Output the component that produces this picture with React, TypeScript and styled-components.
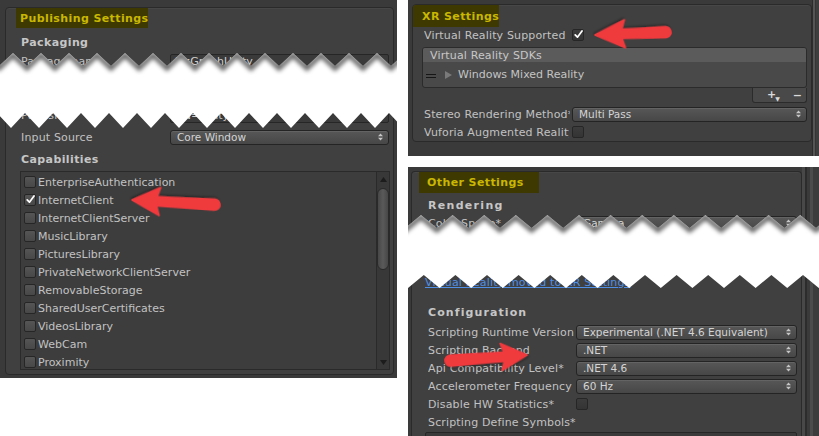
import React from "react";
import styled, { createGlobalStyle } from "styled-components";

const GlobalStyle = createGlobalStyle`
  html, body { margin: 0; padding: 0; background: #ffffff; overflow: hidden; }
  body {
    font-family: "DejaVu Sans", "Liberation Sans", sans-serif;
    font-size: 11px;
    color: #c2c2c2;
  }
  #root { width: 819px; height: 436px; }
`;

const Page = styled.main`
  position: relative;
  width: 819px;
  height: 436px;
  display: flex;
  gap: 11px;
  align-items: flex-start;
`;

const Column = styled.div`
  display: flex;
  flex-direction: column;
  gap: 11px;
  width: 411px;
  flex: none;
`;

const Panel = styled.section<{ $w: number; $h: number }>`
  position: relative;
  width: ${(p) => p.$w}px;
  height: ${(p) => p.$h}px;
  flex: none;
  display: flex;
  background: #3a3a3a;
  overflow: hidden;
`;

const Box = styled.div<{ $m: string; $open?: boolean }>`
  flex: 1;
  min-width: 0;
  margin: ${(p) => p.$m};
  border: 1px solid #2a2a2a;
  border-bottom: ${(p) => (p.$open ? "none" : "1px solid #2a2a2a")};
  border-radius: ${(p) => (p.$open ? "4px 4px 0 0" : "4px")};
  background: #404040;
  box-shadow: inset 0 1px 0 rgba(255, 255, 255, 0.04);
  display: flex;
  flex-direction: column;
  overflow: hidden;
`;

const Rail = styled.div<{ $w: number; $bg: string }>`
  width: ${(p) => p.$w}px;
  flex: none;
  background: ${(p) => p.$bg};
`;

const Title = styled.div<{ $ml: number; $w: number; $h: number; $pl: number }>`
  flex: none;
  margin-left: ${(p) => p.$ml}px;
  width: ${(p) => p.$w}px;
  height: ${(p) => p.$h}px;
  box-sizing: border-box;
  padding-left: ${(p) => p.$pl}px;
  display: flex;
  align-items: center;
  background: #3e3900;
  color: #c9b700;
  font-weight: bold;
  font-size: 11px;
  letter-spacing: 0.4px;
  white-space: nowrap;
`;

const Body = styled.div<{ $pl: number; $pr: number }>`
  display: flex;
  flex-direction: column;
  padding: 0 ${(p) => p.$pr}px 0 ${(p) => p.$pl}px;
`;

const Heading = styled.div<{ $mt: number; $ls?: number }>`
  height: 18px;
  margin-top: ${(p) => p.$mt}px;
  display: flex;
  align-items: center;
  font-weight: bold;
  color: #c6c6c6;
  letter-spacing: ${(p) => p.$ls ?? 0.4}px;
  white-space: nowrap;
`;

const Row = styled.div<{ $mt?: number; $h?: number }>`
  height: ${(p) => p.$h ?? 18}px;
  margin-top: ${(p) => p.$mt ?? 0}px;
  display: flex;
  align-items: center;
  flex: none;
`;

const Label = styled.span<{ $w: number; $gap?: number }>`
  width: ${(p) => p.$w}px;
  margin-right: ${(p) => p.$gap ?? 0}px;
  flex: none;
  white-space: nowrap;
  overflow: hidden;
  color: #c2c2c2;
  letter-spacing: 0.15px;
`;

const Popup = styled.div`
  flex: 1;
  min-width: 0;
  height: 15px;
  box-sizing: border-box;
  border: 1px solid #242424;
  border-radius: 3px;
  background: linear-gradient(#575757, #474747);
  box-shadow: inset 0 1px 0 rgba(255, 255, 255, 0.08);
  padding: 0 5px 0 6px;
  display: flex;
  align-items: center;
  justify-content: space-between;
  color: #d4d4d4;
  font-size: 10.5px;
  white-space: nowrap;
`;

const Field = styled.div<{ $h?: number; $ml?: number }>`
  flex: 1;
  min-width: 0;
  height: ${(p) => p.$h ?? 15}px;
  margin-left: ${(p) => p.$ml ?? 0}px;
  box-sizing: border-box;
  border: 1px solid #262626;
  border-radius: 2px;
  background: #3a3a3a;
  padding-left: 4px;
  display: flex;
  align-items: center;
  color: #cfcfcf;
  white-space: nowrap;
`;

const Check = styled.span<{ $dark?: boolean }>`
  width: 12px;
  height: 12px;
  box-sizing: border-box;
  flex: none;
  border: 1px solid #262626;
  border-radius: 2px;
  background: ${(p) =>
    p.$dark ? "linear-gradient(#3c3c3c, #343434)" : "linear-gradient(#555555, #484848)"};
  display: inline-flex;
  align-items: center;
  justify-content: center;
`;

const Link = styled.span`
  margin-left: -3px;
  color: #4f8fe6;
  text-decoration: underline;
  white-space: nowrap;
  letter-spacing: 0.15px;
`;

/* capabilities list */
const CapFrame = styled.div`
  display: flex;
  height: 199px;
  margin: 3px -1px 0 -1px;
  flex: none;
`;

const CapList = styled.div`
  flex: 1;
  border: 1px solid #2a2a2a;
  background: #3d3d3d;
  padding-top: 1px;
  overflow: hidden;
`;

const CapItem = styled.div`
  height: 18px;
  padding-left: 3px;
  display: flex;
  align-items: center;
  gap: 2px;
  color: #c2c2c2;
  white-space: nowrap;
`;

const ScrollTrack = styled.div`
  width: 13px;
  flex: none;
  box-sizing: border-box;
  border: 1px solid #2a2a2a;
  border-left: none;
  background: #383838;
  display: flex;
  flex-direction: column;
`;

const ScrollArrow = styled.div`
  height: 14px;
  flex: none;
  display: flex;
  align-items: center;
  justify-content: center;
`;

const ScrollThumb = styled.div`
  height: 82px;
  margin-top: 2px;
  flex: none;
  box-sizing: border-box;
  border: 1px solid #2a2a2a;
  border-radius: 6px;
  background: linear-gradient(to right, #474747, #5a5a5a 50%, #474747);
`;

const ScrollSpace = styled.div`
  flex: 1;
`;

/* XR reorderable list */
const SdkList = styled.div`
  margin: 4px 0 0 -2px;
  border: 1px solid #2b2b2b;
  border-radius: 3px;
  overflow: hidden;
  background: #494949;
  flex: none;
`;

const SdkHeader = styled.div`
  height: 14px;
  padding-left: 7px;
  display: flex;
  align-items: center;
  background: #5b5b5b;
  color: #c8c8c8;
  letter-spacing: 0.15px;
`;

const SdkRow = styled.div`
  height: 25px;
  padding-left: 3px;
  display: flex;
  align-items: center;
  color: #c4c4c4;
`;

const Handle = styled.span`
  width: 10px;
  height: 4px;
  border-top: 1px solid #161616;
  border-bottom: 1px solid #161616;
  box-sizing: border-box;
  margin-top: 3px;
  margin-right: 9px;
`;

const Disclosure = styled.span`
  width: 0;
  height: 0;
  border-top: 4px solid transparent;
  border-bottom: 4px solid transparent;
  border-left: 7px solid #7a7a7a;
  margin-right: 6px;
`;

const SdkFooter = styled.div`
  align-self: flex-end;
  width: 55px;
  height: 15px;
  box-sizing: border-box;
  border: 1px solid #2b2b2b;
  border-top: none;
  border-radius: 0 0 3px 3px;
  background: #494949;
  display: flex;
  align-items: center;
  padding-left: 14px;
  gap: 13px;
  color: #dadada;
  font-weight: bold;
  flex: none;
`;

const Tiny = styled.span`
  font-size: 6px;
  margin-left: -1px;
  vertical-align: -3px;
`;

/* overlays */
const TearLayer = styled.svg<{ $top: number }>`
  position: absolute;
  left: 0;
  top: ${(p) => p.$top}px;
  pointer-events: none;
`;

const ArrowLayer = styled.svg`
  position: absolute;
  left: 0;
  top: 0;
  pointer-events: none;
`;

const Spinner = () => (
  <svg width="5" height="8" viewBox="0 0 5 8">
    <path d="M0 3.2 L2.5 0.5 L5 3.2 Z M0 4.8 L2.5 7.5 L5 4.8 Z" fill="#c6c6c6" />
  </svg>
);

const Tick = () => (
  <svg width="11" height="11" viewBox="0 0 11 11" style={{ marginTop: -2, marginLeft: 1 }}>
    <path d="M1.5 6 L4.2 8.8 L9.8 1.2" stroke="#ffffff" strokeWidth="2.1" fill="none" strokeLinecap="round" strokeLinejoin="round" />
  </svg>
);

const Tri = ({ up }: { up: boolean }) => (
  <svg width="7" height="5" viewBox="0 0 7 5">
    <path d={up ? "M0 5 L3.5 0 L7 5 Z" : "M0 0 L3.5 5 L7 0 Z"} fill="#1c1c1c" />
  </svg>
);

function tearPaths(
  width: number,
  height: number,
  period: number,
  ampTop: number,
  ampBot: number,
  phaseTop: number,
  phaseBot: number
) {
  const top: string[] = [];
  let x = phaseTop - period;
  top.push(`M${x} 0`);
  while (x < width + period) {
    top.push(`L${(x + period / 2).toFixed(1)} ${ampTop}`);
    x += period;
    top.push(`L${x.toFixed(1)} 0`);
  }
  const endX = x;
  const bot: string[] = [];
  let bx = phaseBot;
  while (bx < endX + period) bx += period;
  bot.push(`L${endX.toFixed(1)} ${height}`);
  bot.push(`L${bx.toFixed(1)} ${height}`);
  while (bx > phaseTop - period * 2) {
    bot.push(`L${(bx - period / 2).toFixed(1)} ${height - ampBot}`);
    bx -= period;
    bot.push(`L${bx.toFixed(1)} ${height}`);
  }
  bot.push(`L${phaseTop - period} ${height}`);
  const fill = top.join(" ") + " " + bot.join(" ") + " Z";
  return { fill, line: top.join(" ") };
}

const Tear = ({
  id,
  top,
  width,
  height,
  period,
  ampTop,
  ampBot,
  phaseTop,
  phaseBot,
}: {
  id: string;
  top: number;
  width: number;
  height: number;
  period: number;
  ampTop: number;
  ampBot: number;
  phaseTop: number;
  phaseBot: number;
}) => {
  const { fill, line } = tearPaths(width, height, period, ampTop, ampBot, phaseTop, phaseBot);
  return (
    <TearLayer $top={top} width={width} height={height} viewBox={`0 0 ${width} ${height}`}>
      <defs>
        <clipPath id={`${id}-clip`}>
          <path d={fill} />
        </clipPath>
        <filter id={`${id}-blur`} x="-10%" y="-50%" width="120%" height="200%">
          <feGaussianBlur stdDeviation="2" />
        </filter>
      </defs>
      <path d={fill} fill="#ffffff" />
      <g clipPath={`url(#${id}-clip)`}>
        <path
          d={line}
          transform="translate(0 2)"
          stroke="#000"
          strokeOpacity="0.6"
          strokeWidth="5"
          fill="none"
          filter={`url(#${id}-blur)`}
        />
      </g>
    </TearLayer>
  );
};

function arrowPath(L: number, hl: number, hw: number, s1: number, s2: number) {
  const bx = -hl;
  return `M0 0 L${bx} ${-hw} L${bx + 3} ${-s1} L${-L + s2} ${-s2} A${s2} ${s2} 0 0 0 ${-L + s2} ${s2} L${bx + 3} ${s1} L${bx} ${hw} Z`;
}

type ArrowSpec = { tip: [number, number]; tail: [number, number]; hl: number; hw: number; s1: number; s2: number };

const arrows: ArrowSpec[] = [
  { tip: [132, 200], tail: [220, 205], hl: 28, hw: 14, s1: 4.5, s2: 5.5 },
  { tip: [595, 35], tail: [671, 32], hl: 30, hw: 14, s1: 4.5, s2: 5.5 },
  { tip: [527, 355], tail: [445, 361], hl: 26, hw: 13.5, s1: 4.5, s2: 5.5 },
];

const Arrows = () => (
  <ArrowLayer width={819} height={436} viewBox="0 0 819 436">
    <defs>
      <filter id="arrow-shadow" x="-20%" y="-50%" width="140%" height="200%">
        <feDropShadow dx="1" dy="1.5" stdDeviation="1.2" floodColor="#000" floodOpacity="0.35" />
      </filter>
    </defs>
    {arrows.map((a, i) => {
      const dx = a.tip[0] - a.tail[0];
      const dy = a.tip[1] - a.tail[1];
      const L = Math.hypot(dx, dy);
      const ang = (Math.atan2(dy, dx) * 180) / Math.PI;
      return (
        <g key={i} transform={`translate(${a.tip[0]} ${a.tip[1]}) rotate(${ang.toFixed(2)})`} filter="url(#arrow-shadow)">
          <path
            d={arrowPath(L, a.hl, a.hw, a.s1, a.s2)}
            fill="#f03a3d"
            stroke="#f03a3d"
            strokeWidth="1.5"
            strokeLinejoin="round"
          />
        </g>
      );
    })}
  </ArrowLayer>
);

const capabilities: { name: string; on?: boolean }[] = [
  { name: "EnterpriseAuthentication" },
  { name: "InternetClient", on: true },
  { name: "InternetClientServer" },
  { name: "MusicLibrary" },
  { name: "PicturesLibrary" },
  { name: "PrivateNetworkClientServer" },
  { name: "RemovableStorage" },
  { name: "SharedUserCertificates" },
  { name: "VideosLibrary" },
  { name: "WebCam" },
  { name: "Proximity" },
];

const configRows: { label: string; value?: string; check?: boolean }[] = [
  { label: "Scripting Runtime Version", value: "Experimental (.NET 4.6 Equivalent)" },
  { label: "Scripting Backend", value: ".NET" },
  { label: "Api Compatibility Level*", value: ".NET 4.6" },
  { label: "Accelerometer Frequency", value: "60 Hz" },
  { label: "Disable HW Statistics*", check: true },
];

export default function App() {
  return (
    <>
      <GlobalStyle />
      <Page>
        {/* Publishing Settings */}
        <Panel $w={397} $h={378}>
          <Box $m="7px 3px 3px 5px">
            <Title $ml={10} $w={132} $h={20} $pl={4}>
              Publishing Settings
            </Title>
            <Body $pl={15} $pr={4}>
              <Heading $mt={5}>Packaging</Heading>
              <Row $mt={1}>
                <Label $w={149}>Package name</Label>
                <Field>MsGraphUnity</Field>
              </Row>
              <Row>
                <Label $w={149}>Package display name</Label>
                <Field>MsGraphUnity</Field>
              </Row>
              <Row>
                <Label $w={149}>Version</Label>
                <Field>1.0.0.0</Field>
              </Row>
              <Row>
                <Label $w={149}>Publisher</Label>
                <Field>CN=Unity</Field>
              </Row>
              <Row $mt={4}>
                <Label $w={149}>Input Source</Label>
                <Popup>
                  Core Window
                  <Spinner />
                </Popup>
              </Row>
              <Heading $mt={4}>Capabilities</Heading>
              <CapFrame>
                <CapList>
                  {capabilities.map((c) => (
                    <CapItem key={c.name}>
                      <Check>{c.on && <Tick />}</Check>
                      {c.name}
                    </CapItem>
                  ))}
                </CapList>
                <ScrollTrack>
                  <ScrollArrow>
                    <Tri up />
                  </ScrollArrow>
                  <ScrollThumb />
                  <ScrollSpace />
                  <ScrollArrow>
                    <Tri up={false} />
                  </ScrollArrow>
                </ScrollTrack>
              </CapFrame>
            </Body>
          </Box>
          <Tear id="tl" top={53} width={397} height={75} period={28} ampTop={13} ampBot={15} phaseTop={13} phaseBot={11} />
        </Panel>

        <Column>
          {/* XR Settings */}
          <Panel $w={411} $h={156}>
            <Box $m="4px 0 14px 4px">
              <Title $ml={0} $w={86} $h={22} $pl={9}>
                XR Settings
              </Title>
              <Body $pl={11} $pr={4}>
                <Row $h={16}>
                  <Label $w={145} $gap={3}>Virtual Reality Supported</Label>
                  <Check $dark>
                    <Tick />
                  </Check>
                </Row>
                <SdkList>
                  <SdkHeader>Virtual Reality SDKs</SdkHeader>
                  <SdkRow>
                    <Handle />
                    <Disclosure />
                    Windows Mixed Reality
                  </SdkRow>
                </SdkList>
                <SdkFooter>
                  <span>
                    +<Tiny>▼</Tiny>
                  </span>
                  <span>−</span>
                </SdkFooter>
                <Row $mt={2}>
                  <Label $w={146} $gap={2}>Stereo Rendering Method*</Label>
                  <Popup>
                    Multi Pass
                    <Spinner />
                  </Popup>
                </Row>
                <Row>
                  <Label $w={145} $gap={3}>Vuforia Augmented Reality</Label>
                  <Check $dark />
                </Row>
              </Body>
            </Box>
            <Rail
              $w={7}
              $bg="linear-gradient(to right, #2c2c2c 0 1px, #555555 1px 3px, #353535 3px 4px, #3e3e3e 4px)"
            />
          </Panel>

          {/* Other Settings */}
          <Panel $w={411} $h={269}>
            <Box $m="4px 0 0 3px" $open>
              <Title $ml={7} $w={120} $h={21} $pl={8}>
                Other Settings
              </Title>
              <Body $pl={16} $pr={4}>
                <Heading $mt={3} $ls={1.3}>Rendering</Heading>
                <Row>
                  <Label $w={148}>Color Space*</Label>
                  <Popup>
                    Gamma
                    <Spinner />
                  </Popup>
                </Row>
                <Row>
                  <Label $w={148}>Auto Graphics API</Label>
                  <Check />
                </Row>
                <Row>
                  <Label $w={148}>Static Batching</Label>
                  <Check />
                </Row>
                <Row $mt={5}>
                  <Link>Virtual Reality moved to XR Settings</Link>
                </Row>
                <Heading $mt={12} $ls={1.1}>Configuration</Heading>
                {configRows.map((r, i) => (
                  <Row key={r.label} $mt={i === 0 ? 2 : 0}>
                    <Label $w={148}>{r.label}</Label>
                    {r.check ? (
                      <Check $dark />
                    ) : (
                      <Popup>
                        {r.value}
                        <Spinner />
                      </Popup>
                    )}
                  </Row>
                ))}
                <Row>
                  <Label $w={200}>Scripting Define Symbols*</Label>
                </Row>
                <Row $mt={1} $h={20}>
                  <Field $h={20} $ml={-3} />
                </Row>
              </Body>
            </Box>
            <Rail
              $w={17}
              $bg="linear-gradient(to right, #484848 0 3px, #2c2c2c 3px 5px, #3a3a3a 5px 8px, #4c4c4c 8px 11px, #3c3c3c 11px)"
            />
            <Tear id="tr" top={48} width={411} height={73} period={31.6} ampTop={13} ampBot={13} phaseTop={13} phaseBot={0} />
          </Panel>
        </Column>
        <Arrows />
      </Page>
    </>
  );
}
